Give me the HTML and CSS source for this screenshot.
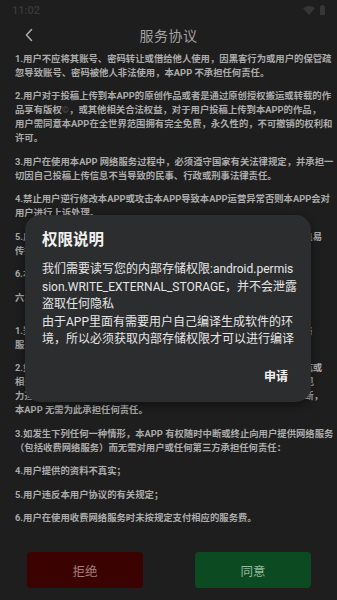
FILE: index.html
```html
<!DOCTYPE html>
<html lang="zh-CN">
<head>
<meta charset="utf-8">
<title>服务协议</title>
<link rel="stylesheet" href="styles.css">
</head>
<body>
<div class="screen">
  <div class="status">
    <span class="time">11:02</span>
    <span class="status-icons">
      <svg class="wifi" width="12" height="9" viewBox="0 0 12 9"><path d="M0 2.2 Q6 -2 12 2.2 L6 9 Z" fill="#363636"/></svg>
      <svg class="battery" width="5" height="10" viewBox="0 0 5 10"><rect x="1.5" y="0" width="2" height="1" fill="#363636"/><rect x="0" y="1" width="5" height="9" rx="0.6" fill="#363636"/></svg>
    </span>
  </div>
  <div class="header">
    <svg class="back" width="10" height="14" viewBox="0 0 10 14"><path d="M7.5 1.5 L2.5 7 L7.5 12.5" fill="none" stroke="#a9a9a9" stroke-width="1.6" stroke-linecap="round" stroke-linejoin="round"/></svg>
    <span class="title">服务协议</span>
  </div>
  <div class="content">
    <p>1.用户不应将其账号、密码转让或借给他人使用，因黑客行为或用户的保管疏<br>忽导致账号、密码被他人非法使用，本APP 不承担任何责任。</p>
    <p>2.用户对于投稿上传到本APP的原创作品或者是通过原创授权搬运或转载的作<br>品享有版权<span class="faint">©</span>，或其他相关合法权益，对于用户投稿上传到本APP的作品，<br>用户需同意本APP在全世界范围拥有完全免费，永久性的，不可撤销的权利和<br>许可。</p>
    <p>3.用户在使用本APP 网络服务过程中，必须遵守国家有关法律规定，并承担一<br>切因自己投稿上传信息不当导致的民事、行政或刑事法律责任。</p>
    <p>4.禁止用户逆行修改本APP或攻击本APP导致本APP运营异常否则本APP会对<br>用户进行上诉处理。</p>
    <p>5.用户须对自己上传的内容负责，不得上传违法违规信息，以免造成不良易<br>传播不良信息，造成不良后果。</p>
    <p>6.本APP保留对本协议的最终解释权。</p>
    <p class="section">六、服务变更、中断或终止</p>
    <p>1.鉴于网络服务的特殊性，用户同意本APP有权随时变更、中断部分网络<br>服务（包括收费网络服务）。</p>
    <p>2.如因系统维护或升级需要而暂停网络服务、服务功能调整，或因不可抗或<br>相关网络运营商出现故障，或电信部门技术调整等原因造成服务中断以见<br>力造成的损失，以及因第三方原因导致本APP网络服务出现暂时性的中断，<br>本APP 无需为此承担任何责任。</p>
    <p>3.如发生下列任何一种情形，本APP 有权随时中断或终止向用户提供网络服务<br>（包括收费网络服务）而无需对用户或任何第三方承担任何责任：</p>
    <p>4.用户提供的资料不真实；</p>
    <p>5.用户违反本用户协议的有关规定；</p>
    <p>6.用户在使用收费网络服务时未按规定支付相应的服务费。</p>
  </div>
  <div class="footer">
    <div class="btn reject">拒绝</div>
    <div class="btn agree">同意</div>
  </div>

  <div class="dialog">
    <div class="dialog-title">权限说明</div>
    <div class="dialog-body">我们需要读写您的内部存储权限:android.permis<br>sion.WRITE_EXTERNAL_STORAGE，并不会泄露<br>盗取任何隐私<br>由于APP里面有需要用户自己编译生成软件的环<br>境，所以必须获取内部存储权限才可以进行编译</div>
    <div class="dialog-actions"><span class="action">申请</span></div>
  </div>
</div>
</body>
</html>
```

FILE: styles.css
```css
* { box-sizing: border-box; }
html, body {
  margin: 0;
  padding: 0;
  background: #1e1e1e;
}
.screen {
  position: relative;
  width: 337px;
  height: 600px;
  overflow: hidden;
  background: #1e1e1e;
  display: flex;
  flex-direction: column;
  font-family: Roboto, "Noto Sans CJK SC", sans-serif;
}
.status {
  height: 20px;
  display: flex;
  align-items: center;
  justify-content: space-between;
  padding: 0 12px 0 12px;
}
.time {
  font-size: 11px;
  color: #3a3a3a;
  font-weight: 500;
}
.status-icons {
  display: flex;
  align-items: center;
  gap: 5px;
}
.header {
  position: relative;
  height: 30px;
  display: flex;
  align-items: center;
  justify-content: center;
}
.back {
  position: absolute;
  left: 24px;
  top: 8px;
}
.title {
  font-size: 14px;
  color: #a3a3a3;
  letter-spacing: 0.5px;
}
.content {
  flex: 1;
  padding: 1.5px 0 0 15px;
  overflow: hidden;
}
.content p {
  margin: 0 0 9.5px 0;
  font-size: 9.35px;
  line-height: 14px;
  color: #ababab;
  font-weight: 700;
  white-space: nowrap;
}
.content p.section {
  margin-bottom: 19px;
}
.faint { color: #4a4a4a; font-weight: 400; }
.footer {
  display: flex;
  justify-content: space-between;
  padding: 0 26px 12px 27px;
}
.btn {
  width: 116px;
  height: 36px;
  border-radius: 4px;
  display: flex;
  align-items: center;
  justify-content: center;
  font-size: 12.5px;
}
.reject {
  background: #3b0202;
  color: #a87f7f;
}
.agree {
  background: #0c4a22;
  color: #94b89d;
}
.dialog {
  position: absolute;
  left: 25px;
  top: 215px;
  width: 286px;
  height: 187px;
  background: #2c2d2f;
  border-radius: 15px;
  box-shadow: 0 3px 10px rgba(0,0,0,0.45);
  padding: 14px 23px 0 17px;
}
.dialog-title {
  font-size: 15.5px;
  line-height: 22px;
  font-weight: 700;
  color: #f2f2f2;
}
.dialog-body {
  margin-top: 10px;
  font-size: 12px;
  line-height: 17.5px;
  color: #e6e6e6;
  white-space: nowrap;
}
.dialog-actions {
  margin-top: 20px;
  display: flex;
  justify-content: flex-end;
}
.action {
  font-size: 12px;
  line-height: 17px;
  font-weight: 700;
  color: #f2f2f2;
}
```
